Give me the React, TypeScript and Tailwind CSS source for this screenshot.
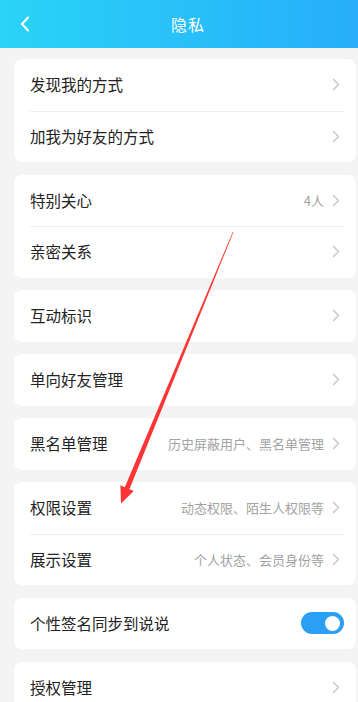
import type { ReactNode } from 'react';

const font = { fontFamily: '"Noto Sans CJK SC", "Noto Sans", sans-serif' };

function Chevron() {
  return (
    <svg width="8" height="13" viewBox="0 0 8 13" className="shrink-0">
      <path d="M1.5 1.5 L6.5 6.5 L1.5 11.5" fill="none" stroke="#c2c2c2" strokeWidth="1.4" strokeLinecap="round" strokeLinejoin="round" />
    </svg>
  );
}

function Row({ label, sub, divider, right }: { label: string; sub?: string; divider?: boolean; right?: ReactNode }) {
  return (
    <div className="h-[51.5px] px-4 relative flex items-center">
      {divider && <div className="absolute top-0 left-4 right-3 h-px bg-[#efefef]" />}
      <span className="flex-1 text-[15.5px] text-[#222222]">{label}</span>
      {right ?? (
        <div className="flex items-center gap-2">
          {sub && <span className="text-[13px] text-[#a3a3a3]">{sub}</span>}
          <Chevron />
        </div>
      )}
    </div>
  );
}

function Card({ children }: { children: ReactNode }) {
  return <div className="bg-white rounded-lg ml-[14px] mr-[2px] overflow-hidden">{children}</div>;
}

function Toggle() {
  return (
    <div className="w-[43px] h-[22px] rounded-full bg-[#2b9ef5] flex items-center justify-end pr-[4px] mr-[-4px]">
      <div className="w-[15px] h-[15px] rounded-full bg-white" />
    </div>
  );
}

export default function App() {
  return (
    <div className="relative w-[358px] h-[702px] overflow-hidden bg-[#f4f4f4]" style={font}>
      <div className="h-12 bg-gradient-to-r from-[#2bd3f7] to-[#27aefa] flex items-center relative">
        <svg width="10" height="16" viewBox="0 0 10 16" className="ml-[20px]">
          <path d="M8 1.5 L2 8 L8 14.5" fill="none" stroke="#fff" strokeWidth="2" strokeLinecap="round" strokeLinejoin="round" />
        </svg>
        <span className="absolute left-[171px] text-white text-[16px] tracking-[1px]">隐私</span>
      </div>

      <div className="pt-[11px] flex flex-col gap-[12.5px]">
        <Card>
          <Row label="发现我的方式" />
          <Row label="加我为好友的方式" divider />
        </Card>
        <Card>
          <Row label="特别关心" sub="4人" />
          <Row label="亲密关系" divider />
        </Card>
        <Card>
          <Row label="互动标识" />
        </Card>
        <Card>
          <Row label="单向好友管理" />
        </Card>
        <Card>
          <Row label="黑名单管理" sub="历史屏蔽用户、黑名单管理" />
        </Card>
        <Card>
          <Row label="权限设置" sub="动态权限、陌生人权限等" />
          <Row label="展示设置" sub="个人状态、会员身份等" divider />
        </Card>
        <Card>
          <Row label="个性签名同步到说说" right={<Toggle />} />
        </Card>
        <Card>
          <Row label="授权管理" />
        </Card>
      </div>

      <svg className="absolute inset-0 pointer-events-none" width="358" height="702" viewBox="0 0 358 702">
        <polygon
          points="232.8,231.9 233.4,232.2 129.4,489.2 133.8,491 121,503.5 120.4,485.3 124.8,487.3"
          fill="#ff3434"
        />
      </svg>
    </div>
  );
}
